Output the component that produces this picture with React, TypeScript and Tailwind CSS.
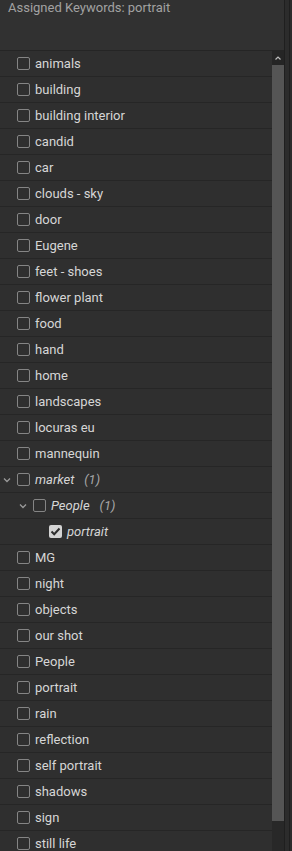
import React from 'react';

interface Keyword {
  label: string;
  depth: number;
  count?: number;
  expanded?: boolean;
  checked?: boolean;
  italic?: boolean;
}

const keywords: Keyword[] = [
  { label: 'animals', depth: 0 },
  { label: 'building', depth: 0 },
  { label: 'building interior', depth: 0 },
  { label: 'candid', depth: 0 },
  { label: 'car', depth: 0 },
  { label: 'clouds - sky', depth: 0 },
  { label: 'door', depth: 0 },
  { label: 'Eugene', depth: 0 },
  { label: 'feet - shoes', depth: 0 },
  { label: 'flower plant', depth: 0 },
  { label: 'food', depth: 0 },
  { label: 'hand', depth: 0 },
  { label: 'home', depth: 0 },
  { label: 'landscapes', depth: 0 },
  { label: 'locuras eu', depth: 0 },
  { label: 'mannequin', depth: 0 },
  { label: 'market', depth: 0, count: 1, expanded: true, italic: true },
  { label: 'People', depth: 1, count: 1, expanded: true, italic: true },
  { label: 'portrait', depth: 2, checked: true, italic: true },
  { label: 'MG', depth: 0 },
  { label: 'night', depth: 0 },
  { label: 'objects', depth: 0 },
  { label: 'our shot', depth: 0 },
  { label: 'People', depth: 0 },
  { label: 'portrait', depth: 0 },
  { label: 'rain', depth: 0 },
  { label: 'reflection', depth: 0 },
  { label: 'self portrait', depth: 0 },
  { label: 'shadows', depth: 0 },
  { label: 'sign', depth: 0 },
  { label: 'still life', depth: 0 },
];

const Chevron = () => (
  <svg width="8" height="6" viewBox="0 0 8 6" className="shrink-0">
    <path d="M1 1.5 L4 4.5 L7 1.5" fill="none" stroke="#9a9a9a" strokeWidth="1.3" />
  </svg>
);

const Checkbox = ({ checked }: { checked?: boolean }) =>
  checked ? (
    <div className="w-[13px] h-[13px] rounded-[2px] bg-[#d4d4d4] flex items-center justify-center shrink-0">
      <svg width="11" height="9" viewBox="0 0 11 9">
        <path d="M1.5 4.5 L4.2 7.2 L9.5 1.5" fill="none" stroke="#2e2e2e" strokeWidth="2" />
      </svg>
    </div>
  ) : (
    <div className="w-[13px] h-[13px] rounded-[2px] border border-[#858585] shrink-0" />
  );

const Row = ({ k }: { k: Keyword }) => {
  // indent per depth: 16px
  const pad = 17 + k.depth * 16;
  return (
    <div
      className="relative h-[26px] shrink-0 flex items-center border-b border-[#262626]"
      style={{ paddingLeft: pad }}
    >
      {k.expanded && (
        <div className="absolute top-[10px]" style={{ left: pad - 14 }}>
          <Chevron />
        </div>
      )}
      <Checkbox checked={k.checked} />
      <span className={`ml-[5px] text-[13px] text-[#d6d6d6] ${k.italic ? 'italic' : ''}`}>{k.label}</span>
      {k.count !== undefined && (
        <span className="ml-[10px] text-[13px] italic text-[#a8a8a8]">({k.count})</span>
      )}
    </div>
  );
};

export default function App() {
  return (
    <div
      className="w-[292px] h-[851px] overflow-hidden flex bg-[#2f2f2f]"
      style={{ fontFamily: 'Roboto, "Noto Sans", sans-serif' }}
    >
      <div className="w-[284px] flex flex-col">
        <div className="h-[51px] shrink-0 border-b border-[#252525] bg-[#313131] px-2">
          <span className="block text-[13px] leading-[16px] text-[#a2a2a2]">Assigned Keywords: portrait</span>
        </div>
        <div className="flex flex-1 min-h-0">
          <div className="flex-1 flex flex-col">
            {keywords.map((k, i) => (
              <Row key={i} k={k} />
            ))}
          </div>
          <div className="w-[12px] shrink-0 flex flex-col bg-[#282828]">
            <div className="h-[14px] shrink-0 flex items-center justify-center bg-[#252525]">
              <svg width="6" height="4" viewBox="0 0 6 4">
                <path d="M0.5 3.5 L3 1 L5.5 3.5" fill="none" stroke="#bdbdbd" strokeWidth="1.2" />
              </svg>
            </div>
            <div className="h-[756px] shrink-0 bg-[#555555]" />
          </div>
        </div>
      </div>
      <div className="w-[8px] flex border-l border-[#1f1f1f]">
        <div className="w-[4px] bg-[#2c2c2c]" />
        <div className="w-[1px] bg-[#1f1f1f]" />
        <div className="flex-1 bg-[#2c2c2c]" />
      </div>
    </div>
  );
}
